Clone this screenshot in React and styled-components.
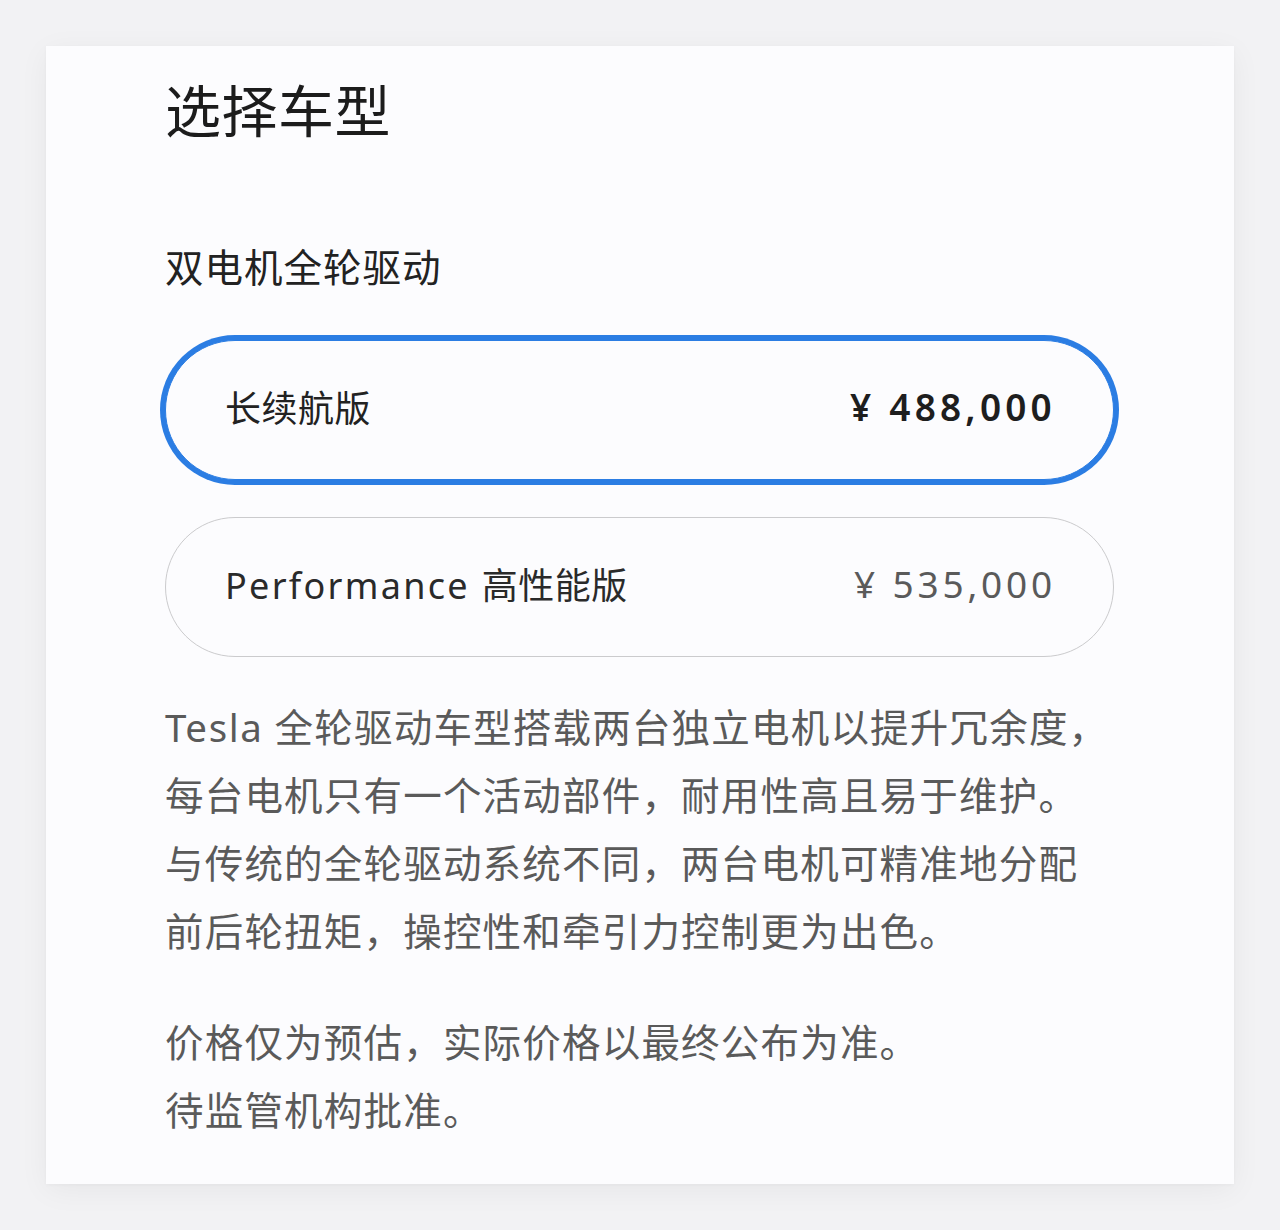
import React from 'react'
import styled, { createGlobalStyle } from 'styled-components'

const GlobalStyle = createGlobalStyle`
  html, body {
    margin: 0;
    padding: 0;
    background: #f2f2f4;
    font-family: "Noto Sans", "Noto Sans CJK SC", sans-serif;
  }
`

const Page = styled.div`
  padding: 46px;
  box-sizing: border-box;
  width: 1280px;
  height: 1230px;
`

const Card = styled.div`
  background: #fcfcfe;
  box-shadow: 0 6px 28px rgba(0, 0, 0, 0.05), 0 1px 4px rgba(0, 0, 0, 0.03);
  padding: 36px 120px 40px 119px;
  box-sizing: border-box;
  height: 1138px;
`

const Title = styled.h1`
  margin: 0;
  font-size: 56px;
  line-height: 56px;
  font-weight: 400;
  color: #1c1c1c;
  letter-spacing: 0.5px;
`

const Subtitle = styled.h2`
  margin: 110px 0 54px;
  font-size: 38.5px;
  line-height: 38px;
  font-weight: 400;
  color: #222;
  letter-spacing: 1px;
`

const Options = styled.div`
  display: flex;
  flex-direction: column;
  gap: 37px;
`

const Option = styled.div`
  display: flex;
  align-items: center;
  justify-content: space-between;
  height: 140px;
  box-sizing: border-box;
  padding: 0 57px 7px 59px;
  border-radius: 70px;
  border: 1.5px solid ${p => (p.selected ? '#2b7de3' : '#cbcbcd')};
  box-shadow: ${p => (p.selected ? '0 0 0 5px #2b7de3' : 'none')};
  background: #fcfcfe;
`

const Label = styled.span`
  font-size: 36px;
  color: ${p => (p.selected ? '#222' : '#2a2a2a')};
  letter-spacing: 0.5px;
`

const Latin = styled.span`
  letter-spacing: ${p => p.spacing}px;
`

const Price = styled.span`
  font-size: 37px;
  font-weight: ${p => (p.selected ? 600 : 400)};
  color: ${p => (p.selected ? '#1e1e1e' : '#5a5a5a')};
  letter-spacing: ${p => (p.selected ? 4.2 : 3.8)}px;
`

const Paragraph = styled.p`
  margin: ${p => p.gap}px 0 0;
  font-size: 38.5px;
  line-height: 68px;
  color: #5a5a5a;
  letter-spacing: 1.2px;
`

const Line = styled.span`
  display: block;
  white-space: nowrap;
`

const options = [
  { latin: null, label: '长续航版', price: '¥ 488,000', selected: true },
  { latin: 'Performance ', label: ' 高性能版', price: '¥ 535,000', selected: false },
]

export default function App() {
  return (
    <>
      <GlobalStyle />
      <Page>
        <Card>
          <Title>选择车型</Title>
          <Subtitle>双电机全轮驱动</Subtitle>
          <Options>
            {options.map(o => (
              <Option key={o.price} selected={o.selected}>
                <Label selected={o.selected}>
                  {o.latin && <Latin spacing={2.3}>{o.latin}</Latin>}
                  {o.latin ? o.label.trim() : o.label}
                </Label>
                <Price selected={o.selected}>{o.price}</Price>
              </Option>
            ))}
          </Options>
          <Paragraph gap={36}>
            <Line>
              <Latin spacing={1.6}>Tesla</Latin> 全轮驱动车型搭载两台独立电机以提升冗余度，
            </Line>
            <Line>每台电机只有一个活动部件，耐用性高且易于维护。</Line>
            <Line>与传统的全轮驱动系统不同，两台电机可精准地分配</Line>
            <Line>前后轮扭矩，操控性和牵引力控制更为出色。</Line>
          </Paragraph>
          <Paragraph gap={43}>
            <Line>价格仅为预估，实际价格以最终公布为准。</Line>
            <Line>待监管机构批准。</Line>
          </Paragraph>
        </Card>
      </Page>
    </>
  )
}
